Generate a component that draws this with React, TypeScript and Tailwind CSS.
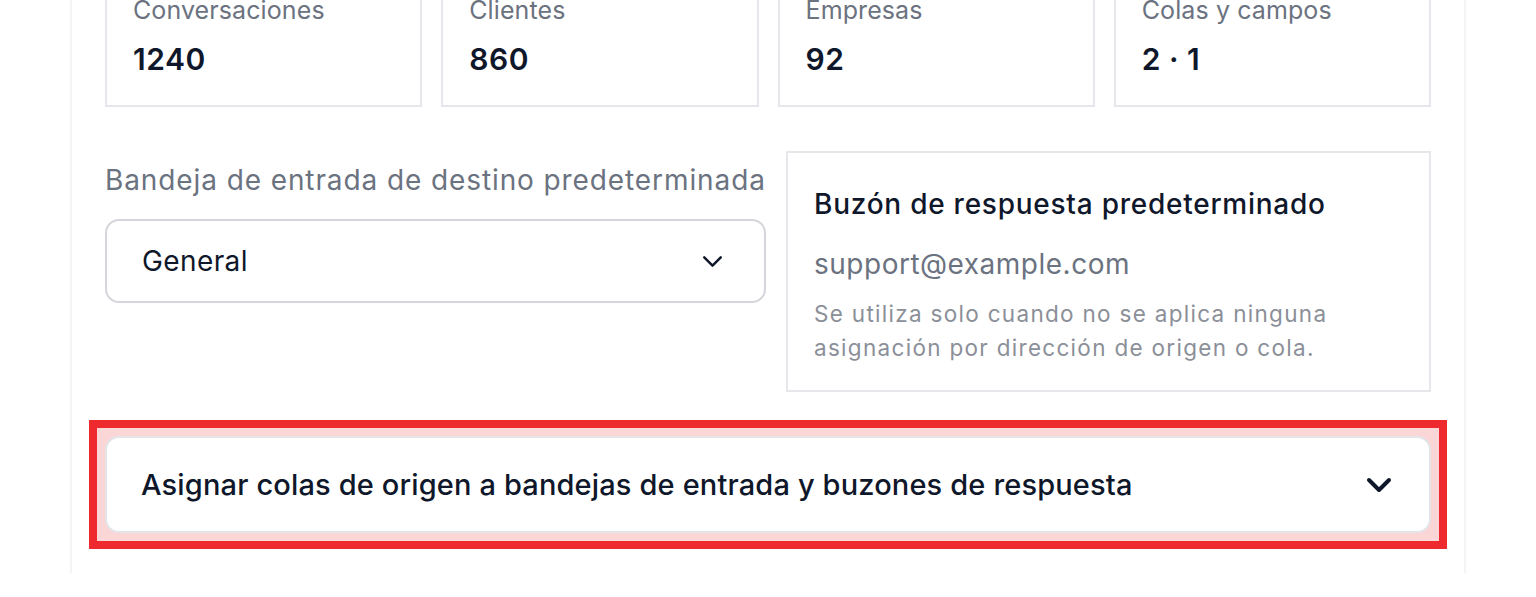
import React from "react";

function Chevron({ className, strokeWidth }: { className?: string; strokeWidth: number }) {
  return (
    <svg viewBox="0 0 24 24" fill="none" stroke="currentColor" strokeWidth={strokeWidth} strokeLinecap="round" strokeLinejoin="round" className={className}>
      <path d="M6 9l6 6 6-6" />
    </svg>
  );
}

const stats = [
  { label: "Conversaciones", value: "1240" },
  { label: "Clientes", value: "860" },
  { label: "Empresas", value: "92" },
  { label: "Colas y campos", value: "2 · 1" },
];

export default function App() {
  return (
    <div className="w-[1536px] h-[597px] overflow-hidden bg-white" style={{ fontFamily: "Inter, 'Noto Sans', sans-serif" }}>
      <div className="mx-[70px] mt-[-34px] border-x-2 border-[#f3f4f6] px-[33px] pb-10 flex flex-col gap-[44px]">
        <div className="grid grid-cols-4 gap-[19px]">
          {stats.map((s) => (
            <div key={s.label} className="border-2 border-[#e5e7eb] pt-[26px] pb-[27px] px-[26px]">
              <div className="text-[25px] leading-[32px] tracking-[0.1px] text-[#6b7280]">{s.label}</div>
              <div className="mt-[14px] text-[30px] leading-[38px] tracking-[0.5px] font-semibold text-[#0f172a]">{s.value}</div>
            </div>
          ))}
        </div>

        <div className="grid grid-cols-[661px_1fr] gap-[20px] items-start">
          <div className="pt-[11px]">
            <div className="text-[28px] leading-[36px] tracking-[0.9px] text-[#6b7280] whitespace-nowrap">Bandeja de entrada de destino predeterminada</div>
            <div className="mt-[21px] h-[84px] rounded-[14px] border-2 border-[#d4d6db] flex items-center justify-between pl-[35px] pr-[35px]">
              <span className="text-[28px] tracking-[0.4px] text-[#0f172a]">General</span>
              <Chevron className="w-[33px] h-[33px] text-[#0f172a]" strokeWidth={1.8} />
            </div>
          </div>
          <div className="border-2 border-[#e5e7eb] pt-[33px] pb-[25px] px-[26px]">
            <div className="text-[28px] leading-[36px] tracking-[0.75px] font-medium text-[#0f172a]">Buzón de respuesta predeterminado</div>
            <div className="mt-[24px] text-[28px] leading-[36px] tracking-[0.5px] text-[#6b7280]">support@example.com</div>
            <div className="mt-[15px] text-[22.5px] leading-[34px] tracking-[1.3px] text-[#8b8f98]">
              Se utiliza solo cuando no se aplica ninguna<br />asignación por dirección de origen o cola.
            </div>
          </div>
        </div>

        <div className="relative">
          <div className="absolute -inset-[16px] border-[8px] border-[#ee2a2f] bg-[#fbd6d7]" />
          <div className="relative h-[97px] rounded-[14px] border-2 border-[#e3e5e8] bg-white flex items-center justify-between pl-[34px] pr-[30px]">
            <span className="text-[29px] tracking-[0.15px] font-medium text-[#0f172a]">Asignar colas de origen a bandejas de entrada y buzones de respuesta</span>
            <Chevron className="w-[40px] h-[40px] text-[#0f172a]" strokeWidth={2.4} />
          </div>
        </div>
      </div>
    </div>
  );
}
